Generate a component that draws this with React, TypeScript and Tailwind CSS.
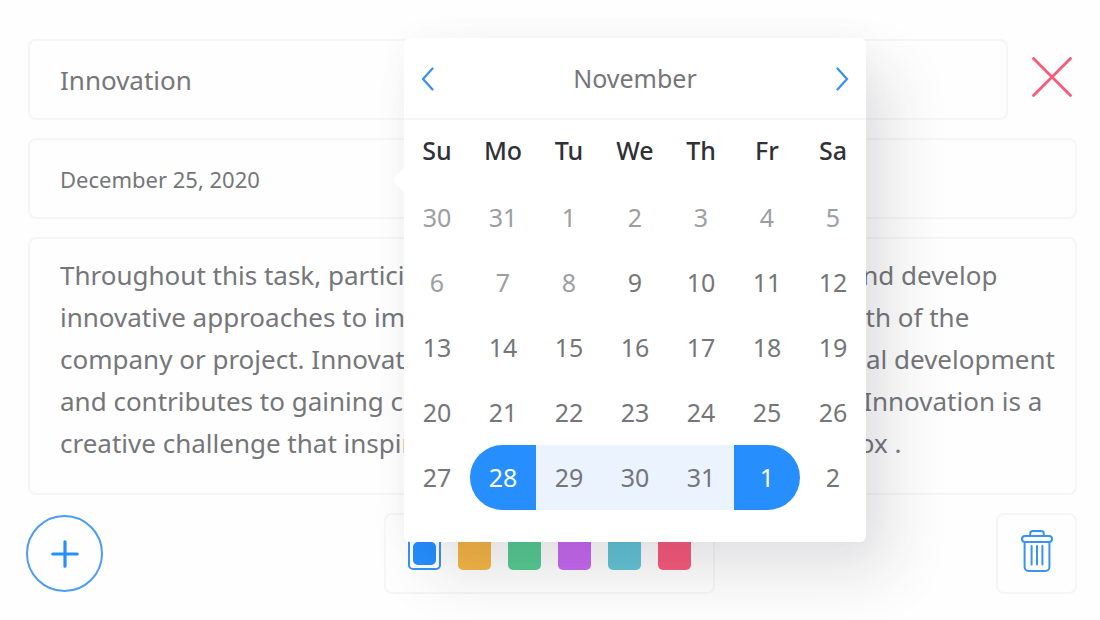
import React, { useState } from "react";
import clsx from "clsx";

const App = () => {
  const [title, setTitle] = useState("Innovation");
  const [date, setDate] = useState("December 25, 2020");
  const [details, setDetails] = useState(defaultDetails);
  const [color, setColor] = useState("blue");

  return (
    <main className="relative min-h-screen bg-[#fefefe] pt-[39px] pr-[23px] pb-6 pl-7 font-['Noto_Sans',sans-serif] text-[#75767a]">
      <form
        className="flex flex-col gap-[18px]"
        onSubmit={(e) => e.preventDefault()}
      >
        <div className="flex items-center gap-6">
          <input
            aria-label="Title"
            value={title}
            onChange={(e) => setTitle(e.target.value)}
            className="h-[81px] min-w-0 flex-1 rounded-lg border-2 border-[#f6f6f7] px-[30px] text-[26px] outline-none"
          />
          <button type="button" aria-label="Close" className="mr-[5px] pb-1.5">
            <CloseIcon />
          </button>
        </div>

        <input
          aria-label="Date"
          value={date}
          onChange={(e) => setDate(e.target.value)}
          className="h-[81px] w-full rounded-lg border-2 border-[#f6f6f7] px-[30px] text-[22px] outline-none"
        />

        <textarea
          aria-label="Details"
          rows={5}
          wrap="off"
          value={details}
          onChange={(e) => setDetails(e.target.value)}
          className="block w-full resize-none overflow-hidden rounded-lg border-2 border-[#f6f6f7] pt-[15px] pr-4 pb-[29px] pl-[30px] text-[26px] leading-[42px] outline-none"
        />

        <div className="-ml-0.5 flex items-center justify-between">
          <button
            type="button"
            aria-label="Add"
            className="flex h-[77px] w-[77px] items-center justify-center rounded-full border-2 border-[#4a9cf7]"
          >
            <PlusIcon />
          </button>

          <div className="flex h-[81px] w-[331px] items-center justify-between rounded-lg border-2 border-[#f6f6f7] px-[22px]">
            {colors.map((item) => (
              <button
                key={item.id}
                type="button"
                aria-label={item.id}
                onClick={() => setColor(item.id)}
                className={clsx(
                  "h-[33px] w-[33px] rounded-[5px]",
                  color === item.id
                    ? "flex items-center justify-center border-2 border-[#3a92f5] bg-white"
                    : item.style
                )}
              >
                {color === item.id && (
                  <span
                    className={clsx("block h-[23px] w-[23px] rounded-[5px]", item.style)}
                  />
                )}
              </button>
            ))}
          </div>

          <button
            type="button"
            aria-label="Delete"
            className="flex h-[81px] w-[81px] items-center justify-center rounded-lg border-2 border-[#f6f6f7] pb-1.5"
          >
            <TrashIcon />
          </button>
        </div>
      </form>

      <Calendar />
    </main>
  );
};

const Calendar = () => {
  return (
    <section className="absolute top-[38px] left-[404px] w-[462px] rounded-md bg-white pb-8 shadow-[26px_32px_60px_rgba(30,30,50,0.12),0_0_36px_rgba(0,0,0,0.03)]">
      <span className="absolute top-[132px] -left-2 h-5 w-5 rotate-45 rounded-[5px] bg-white" />
      <header className="flex h-[82px] items-center justify-between border-b-2 border-[#f5f6f9] px-4 pt-0.5">
        <button type="button" aria-label="Previous month">
          <ChevronIcon />
        </button>
        <h2 className="text-[25px]">November</h2>
        <button type="button" aria-label="Next month" className="rotate-180">
          <ChevronIcon />
        </button>
      </header>

      <table className="w-full table-fixed text-center text-[25px]">
        <thead>
          <tr>
            {weekDays.map((day) => (
              <th key={day} className="h-[65px] p-0 pb-1 font-medium text-[#303136]">
                {day}
              </th>
            ))}
          </tr>
        </thead>
        <tbody>
          {weeks.map((week, row) => (
            <tr key={row}>
              {week.map((day, col) => {
                const index = row * 7 + col;
                return (
                  <td key={col} className="p-0">
                    <button
                      type="button"
                      className={clsx(
                        "block h-[65px] w-full",
                        index < firstActive && "text-[#9c9ea2]",
                        index === rangeStart && "rounded-l-full bg-[#268efd] text-white",
                        index === rangeEnd && "rounded-r-full bg-[#268efd] text-white",
                        index > rangeStart && index < rangeEnd && "bg-[#ebf3ff]"
                      )}
                    >
                      {day}
                    </button>
                  </td>
                );
              })}
            </tr>
          ))}
        </tbody>
      </table>
    </section>
  );
};

const ChevronIcon = () => (
  <svg width="14" height="26" viewBox="0 0 14 26" fill="none" stroke="#3490f3" strokeWidth="2.2" strokeLinecap="round">
    <path d="M12.5 2.5 3 13 12.5 23.5" />
  </svg>
);

const CloseIcon = () => (
  <svg width="40" height="40" viewBox="0 0 40 40" fill="none" stroke="#f8597b" strokeWidth="2.8" strokeLinecap="round">
    <path d="M1.5 1.5 38.5 38.5M38.5 1.5 1.5 38.5" />
  </svg>
);

const PlusIcon = () => (
  <svg width="28" height="28" viewBox="0 0 28 28" fill="none" stroke="#268efd" strokeWidth="3.2" strokeLinecap="round">
    <path d="M14 1.8V26.2M1.8 14H26.2" />
  </svg>
);

const TrashIcon = () => (
  <svg width="32" height="42" viewBox="0 0 32 42" fill="none" stroke="#3a92f5" strokeWidth="2" strokeLinecap="round">
    <path d="M9.2 6V3.6A2.6 2.6 0 0 1 11.8 1H20.2A2.6 2.6 0 0 1 22.8 3.6V6" />
    <rect x="1" y="6" width="30" height="6" rx="3" />
    <path d="M3.6 12V37A4 4 0 0 0 7.6 41H24.4A4 4 0 0 0 28.4 37V12" />
    <path d="M10.6 16V34.5M16 16V34.5M21.4 16V34.5" />
  </svg>
);

export default App;

const defaultDetails = [
  "Throughout this task, participants will be encouraged to explore and develop",
  "innovative approaches to improve processes and sustain the growth of the",
  "company or project. Innovation plays a key role in their professional development",
  "and contributes to gaining competitive advantage on the market. Innovation is a",
  "creative challenge that inspires participants to think outside the box .",
].join("\n");

const colors = [
  { id: "blue", style: "bg-[#268efd]" },
  { id: "yellow", style: "bg-[#f5b544]" },
  { id: "green", style: "bg-[#56ca91]" },
  { id: "purple", style: "bg-[#c668f0]" },
  { id: "teal", style: "bg-[#62c4d6]" },
  { id: "red", style: "bg-[#f8597b]" },
];

const weekDays = ["Su", "Mo", "Tu", "We", "Th", "Fr", "Sa"];

const weeks = [
  [30, 31, 1, 2, 3, 4, 5],
  [6, 7, 8, 9, 10, 11, 12],
  [13, 14, 15, 16, 17, 18, 19],
  [20, 21, 22, 23, 24, 25, 26],
  [27, 28, 29, 30, 31, 1, 2],
];

// positions in the flattened weeks grid
const firstActive = 10;
const rangeStart = 29;
const rangeEnd = 33;
